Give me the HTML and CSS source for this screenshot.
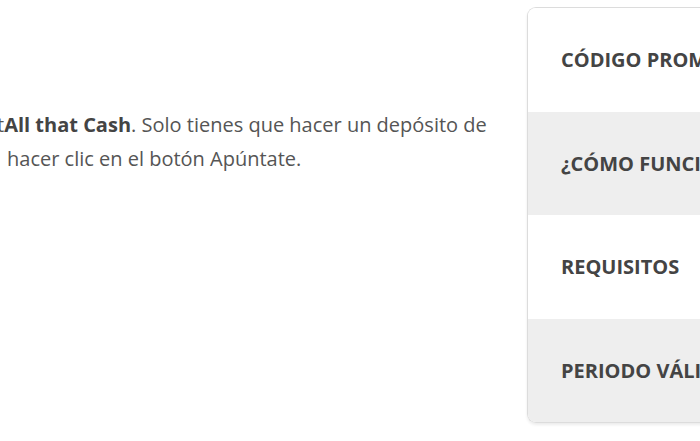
FILE: index.html
```html
<!DOCTYPE html>
<html lang="es">
<head>
<meta charset="utf-8">
<link rel="stylesheet" href="styles.css">
</head>
<body>
<div class="page">
  <div class="content">
    <p class="intro"><span class="line">t<strong>All that Cash</strong>. Solo tienes que hacer un depósito de</span><span class="line second">hacer clic en el botón Apúntate.</span></p>
  </div>
  <aside class="panel">
    <div class="row">CÓDIGO PROMOCIONAL</div>
    <div class="row alt">¿CÓMO FUNCIONA?</div>
    <div class="row">REQUISITOS</div>
    <div class="row alt">PERIODO VÁLIDO</div>
  </aside>
</div>
</body>
</html>
```

FILE: styles.css
```css
html, body {
  margin: 0;
  padding: 0;
  background: #fff;
  overflow: hidden;
}
.page {
  width: 700px;
  height: 441px;
  display: flex;
  font-family: "Open Sans", sans-serif;
  overflow: hidden;
}
.content {
  width: 527px;
  flex: none;
  overflow: hidden;
}
.intro {
  margin: 108px 0 0 -3px;
  font-size: 20px;
  line-height: 34px;
  color: #555;
  white-space: nowrap;
}
.intro strong {
  color: #444;
  font-weight: 700;
}
.line {
  display: block;
}
.second {
  padding-left: 10px;
}
.panel {
  margin-top: 7px;
  width: 260px;
  height: 414px;
  flex: none;
  border: 1px solid #dcdcdc;
  border-right: none;
  border-radius: 9px 0 0 9px;
  overflow: hidden;
  box-shadow: 0 2px 3px rgba(0,0,0,0.08);
  display: flex;
  flex-direction: column;
}
.row {
  flex: 1;
  display: flex;
  align-items: center;
  padding-left: 33px;
  font-size: 20px;
  font-weight: 700;
  color: #444;
  white-space: nowrap;
  background: #fff;
}
.row.alt {
  background: #eeeeee;
}
```
